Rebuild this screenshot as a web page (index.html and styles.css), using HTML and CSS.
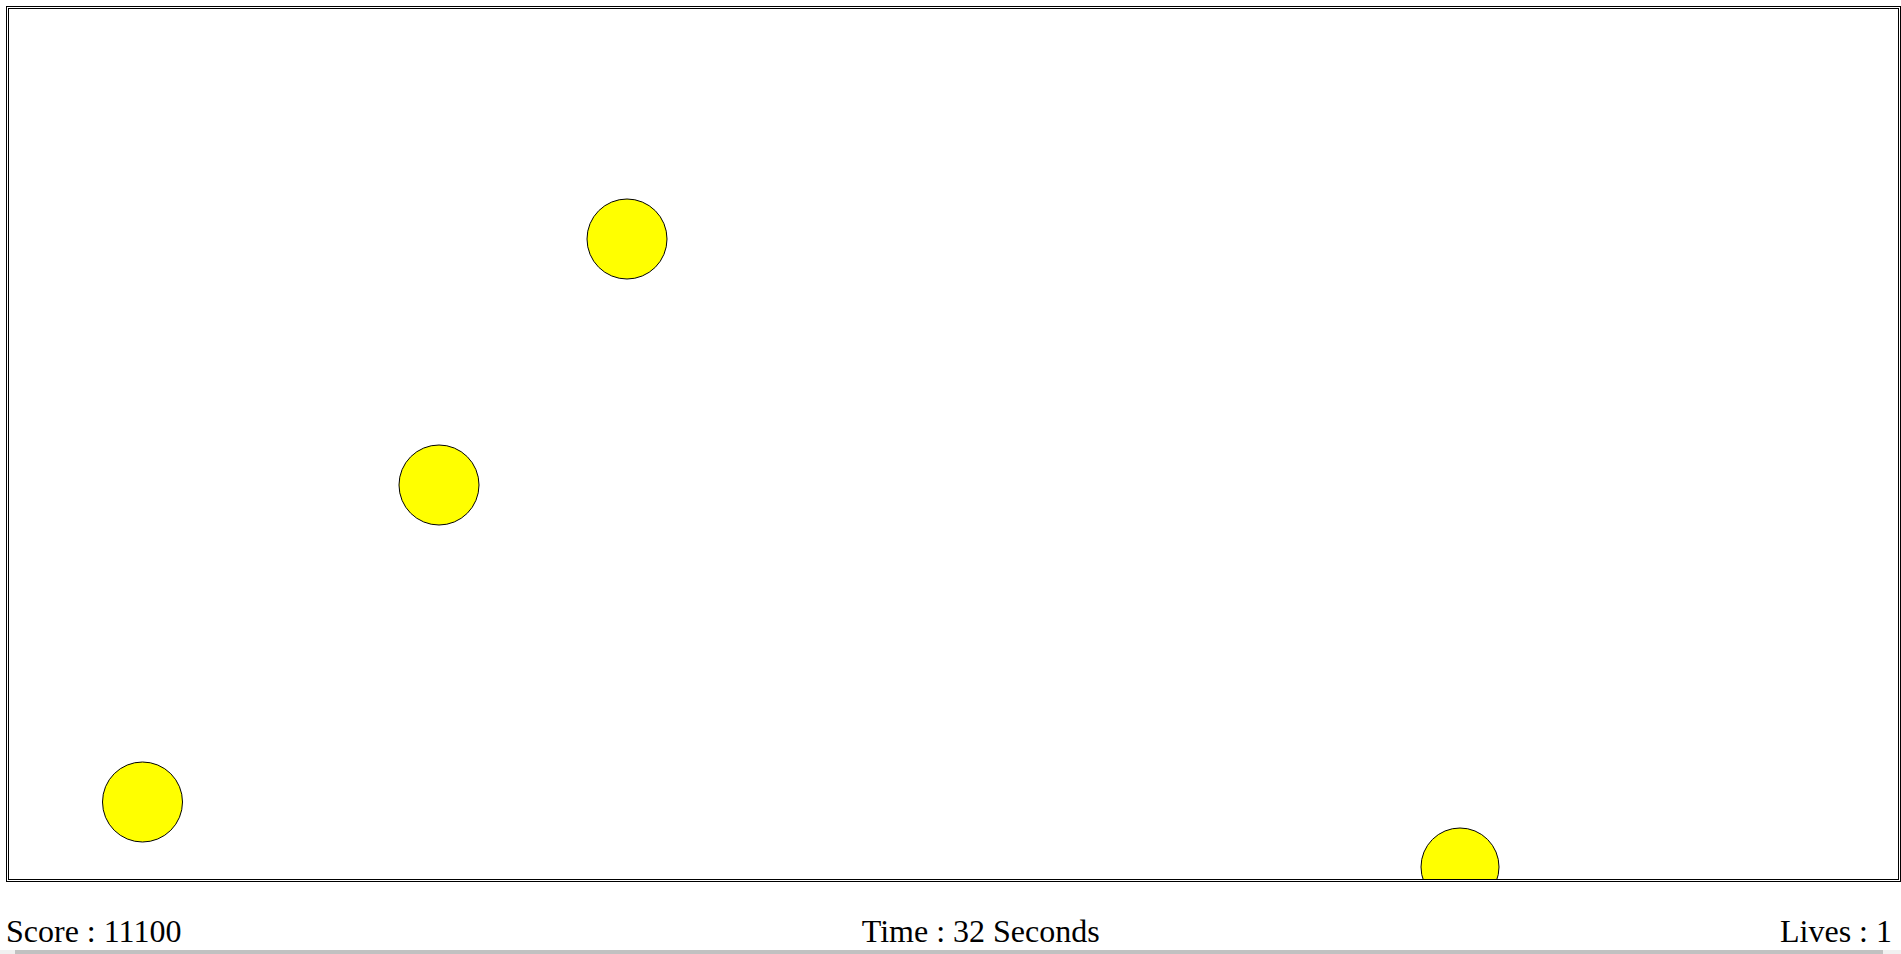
FILE: index.html
```html
<!DOCTYPE html>
<html>
<head>
<meta charset="utf-8">
<title>Game</title>
<link rel="stylesheet" href="styles.css">
</head>
<body>
<div class="board">
  <svg class="field" width="1889" height="870" viewBox="0 0 1889 870">
    <circle cx="618" cy="230" r="40" fill="#ffff00" stroke="#000" stroke-width="1"/>
    <circle cx="430" cy="476" r="40" fill="#ffff00" stroke="#000" stroke-width="1"/>
    <circle cx="133.5" cy="793" r="40" fill="#ffff00" stroke="#000" stroke-width="1"/>
    <circle cx="1451" cy="858" r="39" fill="#ffff00" stroke="#000" stroke-width="1"/>
  </svg>
</div>
<div class="status">
  <span class="stat">Score : 11100</span>
  <span class="stat">Time : 32 Seconds</span>
  <span class="stat">Lives : 1</span>
</div>
<div class="hscroll"><div class="thumb"></div></div>
</body>
</html>
```

FILE: styles.css
```css
html {
  overflow: hidden;
}
body {
  margin: 6px 0 0 6px;
  font-family: "Liberation Serif", "Times New Roman", serif;
  color: #000;
  background: #fff;
}
.board {
  width: 1889px;
  height: 870px;
  border: 3px double #000;
}
.field {
  display: block;
  overflow: hidden;
}
.status {
  margin-top: 31px;
  padding-right: 9px;
  display: flex;
  justify-content: space-between;
  font-size: 32px;
  line-height: normal;
}
.hscroll {
  position: fixed;
  left: 0;
  right: 0;
  bottom: 0;
  height: 4px;
  background: #f1f1f1;
}
.thumb {
  margin-left: 15px;
  width: 1868px;
  height: 4px;
  background: #c1c1c1;
}
```
